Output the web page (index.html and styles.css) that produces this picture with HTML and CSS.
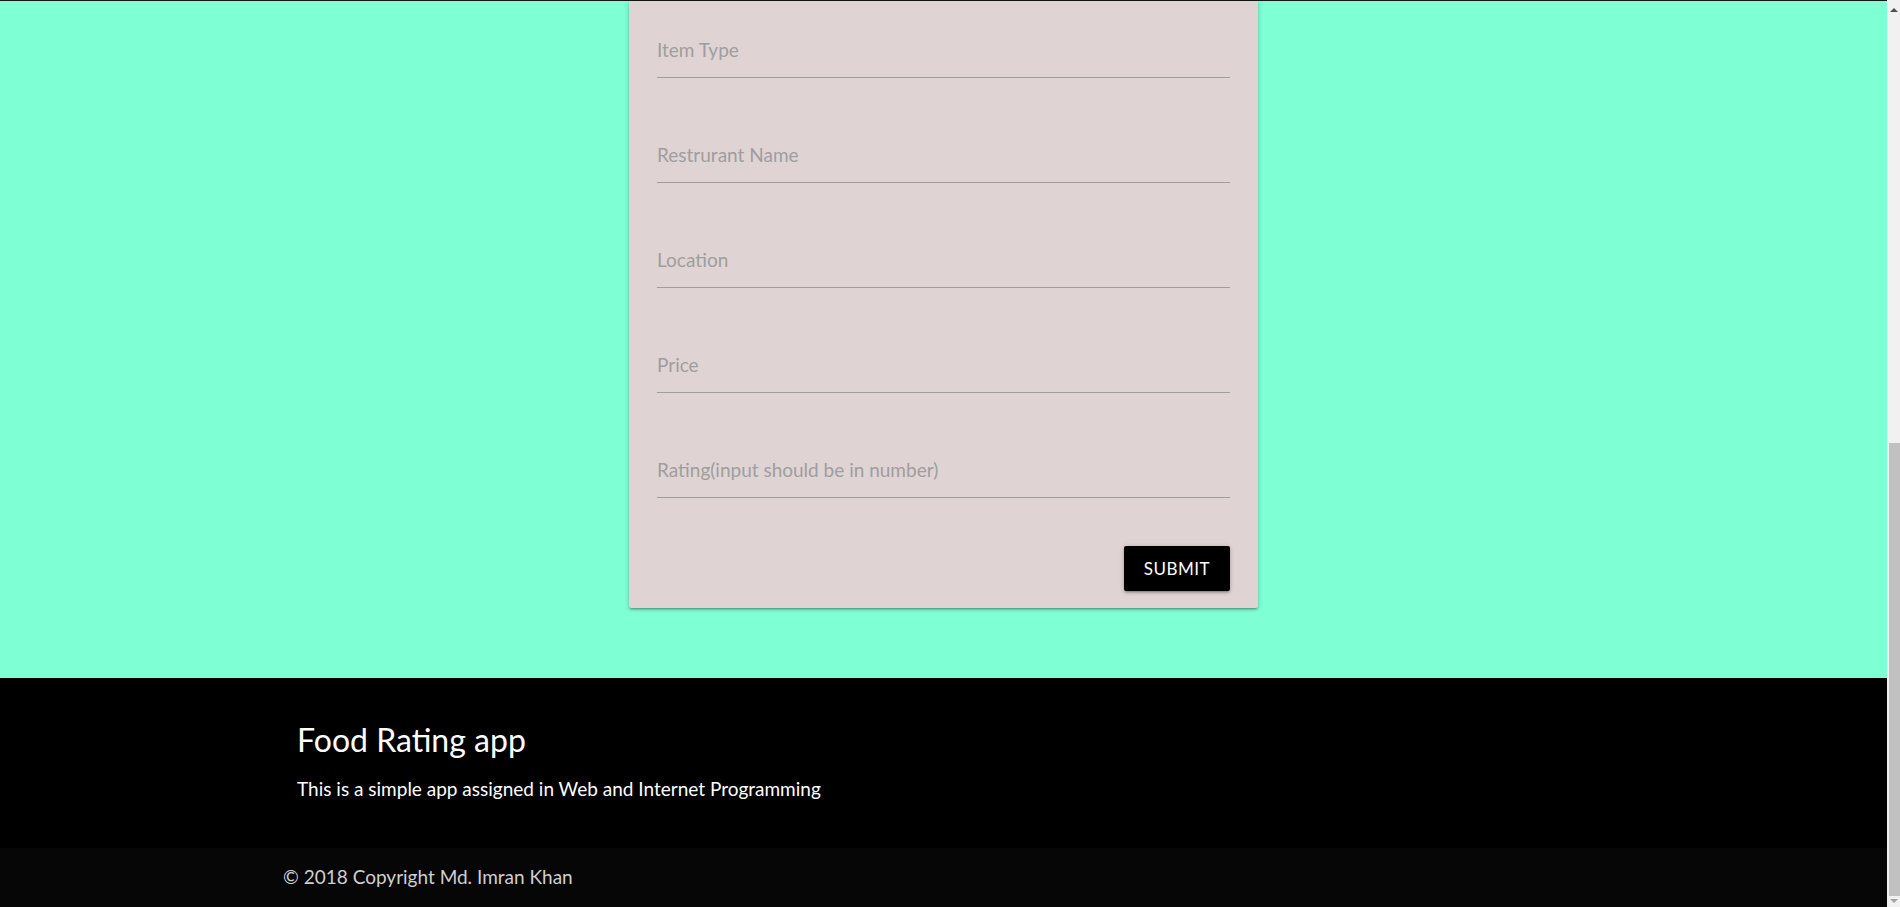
FILE: index.html
```html
<!DOCTYPE html>
<html lang="en">
<head>
<meta charset="utf-8">
<title>Food Rating app</title>
<link rel="stylesheet" href="styles.css">
</head>
<body>
<div class="page">
  <div class="viewport">
    <main class="hero">
      <form class="card">
        <div class="field"><span class="label">Item Type</span></div>
        <div class="field"><span class="label">Restrurant Name</span></div>
        <div class="field"><span class="label">Location</span></div>
        <div class="field"><span class="label">Price</span></div>
        <div class="field"><span class="label">Rating(input should be in number)</span></div>
        <div class="actions"><button type="button" class="btn">SUBMIT</button></div>
      </form>
    </main>
    <footer class="footer">
      <div class="footer-main">
        <div class="container">
          <h5 class="footer-title">Food Rating app</h5>
          <p class="footer-text">This is a simple app assigned in Web and Internet Programming</p>
        </div>
      </div>
      <div class="footer-copyright">
        <div class="container copy">© 2018 Copyright Md. Imran Khan</div>
      </div>
    </footer>
  </div>
  <div class="scrollbar">
    <div class="sb-btn sb-up"><span class="tri-up"></span></div>
    <div class="sb-track"><div class="sb-thumb"></div></div>
    <div class="sb-btn sb-down"><span class="tri-down"></span></div>
  </div>
</div>
</body>
</html>
```
FILE: styles.css
```css
* { box-sizing: border-box; }
html, body { margin: 0; padding: 0; height: 907px; overflow: hidden; }
body { font-family: Lato, "Open Sans", sans-serif; }

.page { display: flex; height: 907px; }
.viewport { flex: 1; display: flex; flex-direction: column; border-top: 1px solid #151515; }

.hero { background: #7fffd4; padding-bottom: 70px; }
.card {
  width: 629px;
  margin: 0 auto;
  background: #e0d3d3;
  border-radius: 0 0 2px 2px;
  padding: 21px 28px 17px;
  box-shadow: 0 2px 2px 0 rgba(0,0,0,0.14), 0 3px 1px -2px rgba(0,0,0,0.12), 0 1px 5px 0 rgba(0,0,0,0.2);
}
.field {
  height: 56px;
  margin-top: 49px;
  border-bottom: 1px solid #9e9e9e;
  display: flex;
  align-items: flex-end;
  padding-bottom: 15px;
}
.field:first-child { margin-top: 0; }
.label { font-size: 19px; line-height: 1.2; color: #9e9e9e; }
.actions { display: flex; justify-content: flex-end; margin-top: 48px; }
.btn {
  width: 106px;
  height: 45px;
  border: none;
  border-radius: 2px;
  background: #000;
  color: #fff;
  font-family: Lato, "Open Sans", sans-serif;
  font-size: 17px;
  letter-spacing: 0.5px;
  box-shadow: 0 2px 2px 0 rgba(0,0,0,0.14), 0 3px 1px -2px rgba(0,0,0,0.12), 0 1px 5px 0 rgba(0,0,0,0.2);
}

.footer { flex: 1; background: #000; color: #fff; display: flex; flex-direction: column; }
.container { width: 70%; margin: 0 auto; }
.footer-main { height: 170px; padding-top: 43px; }
.footer-main .container { padding: 0 14px; }
.footer-title { margin: 0; font-size: 32px; font-weight: 400; line-height: 1.2; }
.footer-text { margin: 19px 0 0; font-size: 19px; line-height: 1.2; }
.footer-copyright { flex: 1; background: #060606; display: flex; align-items: center; }
.copy { font-size: 19px; line-height: 1.2; color: #cfcfcf; }

.scrollbar { width: 13px; background: #f1f1f1; display: flex; flex-direction: column; }
.sb-btn { display: flex; justify-content: center; }
.sb-up { height: 17px; padding-top: 8px; }
.sb-track { flex: 1; display: flex; flex-direction: column; }
.sb-thumb { margin-top: 426px; height: 453px; margin-left: 2px; background: #c1c1c1; }
.sb-down { height: 11px; padding-top: 3px; }
.tri-up { width: 0; height: 0; border-left: 4px solid transparent; border-right: 4px solid transparent; border-bottom: 4px solid #505050; }
.tri-down { width: 0; height: 0; border-left: 4px solid transparent; border-right: 4px solid transparent; border-top: 4px solid #a3a3a3; }
```
